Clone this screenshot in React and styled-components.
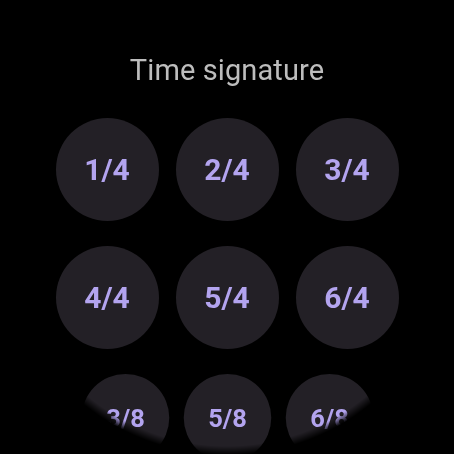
import React from 'react';
import styled, { createGlobalStyle } from 'styled-components';

const GlobalStyle = createGlobalStyle`
  html, body {
    margin: 0;
    padding: 0;
    background: #000;
  }
  body {
    font-family: Roboto, 'Noto Sans', sans-serif;
  }
`;

const Screen = styled.div`
  width: 454px;
  height: 454px;
  background: #000;
  overflow: hidden;
  display: flex;
  flex-direction: column;
  align-items: center;
  padding-top: 53px;
  box-sizing: border-box;
  -webkit-mask-image: radial-gradient(circle at 227px 227px, #000 219px, transparent 228px);
  mask-image: radial-gradient(circle at 227px 227px, #000 219px, transparent 228px);
`;

const Title = styled.h1`
  margin: 0;
  font-size: 29px;
  line-height: 34px;
  font-weight: 400;
  color: #bdbdbd;
  letter-spacing: 0.1px;
`;

const Grid = styled.div`
  margin-top: 31px;
  display: flex;
  flex-direction: column;
  gap: 25px;
`;

const Row = styled.div`
  display: grid;
  grid-template-columns: repeat(3, 103px);
  column-gap: 17px;
  transform: ${(props) => (props.scale ? `scale(${props.scale})` : 'none')};
  transform-origin: top center;
`;

const Chip = styled.button`
  width: 103px;
  height: 103px;
  border: none;
  border-radius: 50%;
  background: #232026;
  color: #b3a4ef;
  font-family: Roboto, 'Noto Sans', sans-serif;
  font-size: 30px;
  font-weight: 700;
  display: flex;
  align-items: center;
  justify-content: center;
  padding: 0;
  cursor: pointer;
`;

const rows = [
  { items: ['1/4', '2/4', '3/4'] },
  { items: ['4/4', '5/4', '6/4'] },
  { items: ['3/8', '5/8', '6/8'], scale: 0.85 },
];

export default function App() {
  return (
    <>
      <GlobalStyle />
      <Screen>
        <Title>Time signature</Title>
        <Grid>
          {rows.map((row, i) => (
            <Row key={i} scale={row.scale}>
              {row.items.map((label) => (
                <Chip key={label}>{label}</Chip>
              ))}
            </Row>
          ))}
        </Grid>
      </Screen>
    </>
  );
}
